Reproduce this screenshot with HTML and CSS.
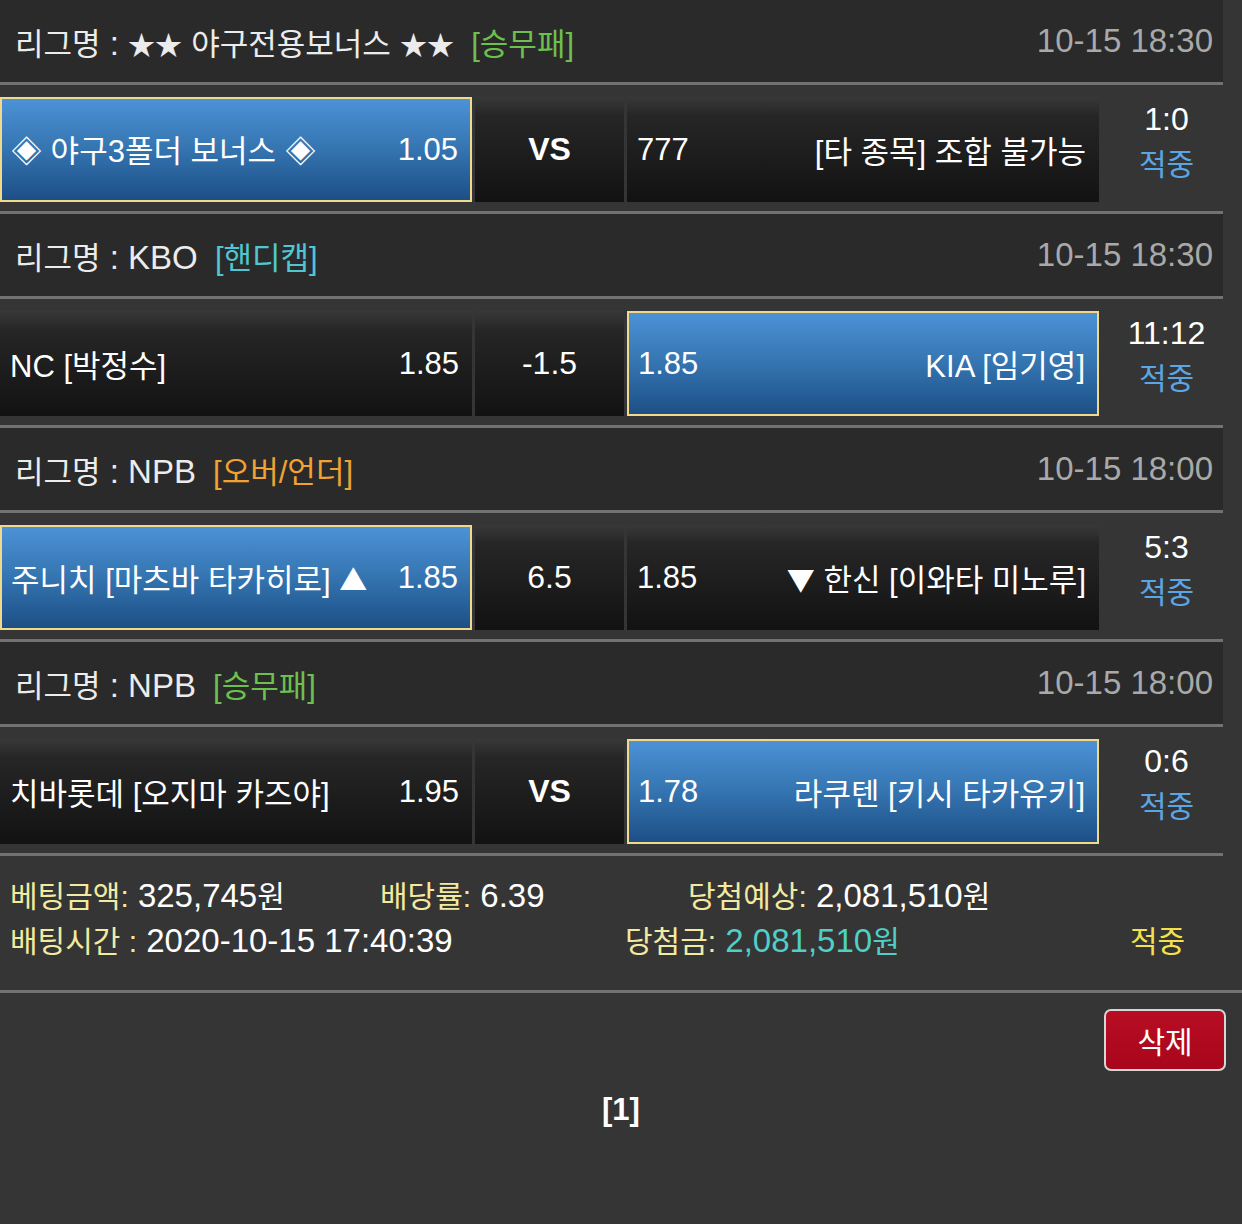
FILE: index.html
```html
<!DOCTYPE html>
<html lang="ko">
<head>
<meta charset="utf-8">
<title>베팅내역</title>
<link rel="stylesheet" href="styles.css">
</head>
<body>
<div class="page">
  <section class="league">
    <div class="lg-head">
      <span class="lg-name"><span class="k">리그명</span> : <span class="star">★★</span> <span class="k">야구전용보너스</span> <span class="star">★★</span> <span class="tag green">[승무패]</span></span>
      <span class="lg-time">10-15 18:30</span>
    </div>
    <div class="match">
      <div class="cell home sel"><span>◈ 야구3폴더 보너스 ◈</span><span>1.05</span></div>
      <div class="cell mid vs">VS</div>
      <div class="cell away"><span>777</span><span>[타 종목] 조합 불가능</span></div>
      <div class="result"><div class="score">1:0</div><div class="hit">적중</div></div>
    </div>
  </section>

  <section class="league">
    <div class="lg-head">
      <span class="lg-name"><span class="k">리그명</span> : KBO <span class="tag cyan">[핸디캡]</span></span>
      <span class="lg-time">10-15 18:30</span>
    </div>
    <div class="match">
      <div class="cell home"><span>NC [박정수]</span><span>1.85</span></div>
      <div class="cell mid">-1.5</div>
      <div class="cell away sel"><span>1.85</span><span>KIA [임기영]</span></div>
      <div class="result"><div class="score">11:12</div><div class="hit">적중</div></div>
    </div>
  </section>

  <section class="league">
    <div class="lg-head">
      <span class="lg-name"><span class="k">리그명</span> : NPB <span class="tag orange">[오버/언더]</span></span>
      <span class="lg-time">10-15 18:00</span>
    </div>
    <div class="match">
      <div class="cell home sel"><span>주니치 [마츠바 타카히로] <span class="arr">▲</span></span><span>1.85</span></div>
      <div class="cell mid">6.5</div>
      <div class="cell away"><span>1.85</span><span><span class="arr">▼</span> 한신 [이와타 미노루]</span></div>
      <div class="result"><div class="score">5:3</div><div class="hit">적중</div></div>
    </div>
  </section>

  <section class="league">
    <div class="lg-head">
      <span class="lg-name"><span class="k">리그명</span> : NPB <span class="tag green">[승무패]</span></span>
      <span class="lg-time">10-15 18:00</span>
    </div>
    <div class="match">
      <div class="cell home"><span>치바롯데 [오지마 카즈야]</span><span>1.95</span></div>
      <div class="cell mid vs">VS</div>
      <div class="cell away sel"><span>1.78</span><span>라쿠텐 [키시 타카유키]</span></div>
      <div class="result"><div class="score">0:6</div><div class="hit">적중</div></div>
    </div>
  </section>

  <section class="summary">
    <div class="sum-line">
      <span class="c1"><span class="lbl">베팅금액:</span> 325,745<span class="k">원</span></span>
      <span class="c2"><span class="lbl">배당률:</span> 6.39</span>
      <span><span class="lbl">당첨예상:</span> 2,081,510<span class="k">원</span></span>
    </div>
    <div class="sum-line">
      <span class="d1"><span class="lbl">배팅시간 :</span> 2020-10-15 17:40:39</span>
      <span class="d2"><span class="lbl">당첨금:</span> <span class="win">2,081,510<span class="k">원</span></span></span>
      <span class="final k">적중</span>
    </div>
  </section>

  <div class="actions">
    <button class="btn-del" type="button">삭제</button>
  </div>
  <div class="pager">[1]</div>
</div>
</body>
</html>
```

FILE: styles.css
```css
html, body {
  margin: 0;
  padding: 0;
  background: #353535;
}

.page {
  width: 1242px;
  min-height: 1224px;
  background: #353535;
  font-family: "Liberation Sans", "Noto Sans CJK KR", sans-serif;
  font-size: 30px;
  color: #ffffff;
}

.league {
  width: 1223px;
}

.lg-head {
  height: 82px;
  background: #2a2a2a;
  border-bottom: 3px solid #727272;
  display: flex;
  align-items: center;
  justify-content: space-between;
  padding: 0 10px 0 15px;
  color: #ececec;
  font-size: 33px;
  white-space: nowrap;
}

.lg-head .k {
  font-size: 31px;
}

.star {
  font-size: 27px;
}

.tag {
  margin-left: 8px;
  font-size: 31px;
}
.tag.green { color: #6cc04e; }
.tag.cyan { color: #4fc6d2; }
.tag.orange { color: #f0a232; }

.lg-time {
  color: #a9a9a9;
  font-size: 33px;
}

.match {
  height: 105px;
  padding: 12px 0 9px;
  border-bottom: 3px solid #727272;
  display: grid;
  grid-template-columns: 472px 149px 472px 1fr;
  column-gap: 3px;
}

.cell {
  box-sizing: border-box;
  height: 105px;
  display: flex;
  align-items: center;
  justify-content: space-between;
  padding: 0 13px 0 10px;
  background: linear-gradient(to bottom, #383838 0%, #262626 18%, #171717 80%, #121212 100%);
  color: #ffffff;
  font-size: 31px;
  white-space: nowrap;
}

.cell.sel {
  background: linear-gradient(to bottom, #4c92d6 0%, #3474b0 50%, #1d4f86 100%);
  border: 2px solid #f1d98c;
  padding: 0 12px 0 9px;
}

.cell.mid {
  justify-content: center;
  padding: 0;
  font-size: 32px;
}

.cell.vs {
  font-weight: bold;
  font-size: 32px;
}

.arr {
  font-family: "Noto Sans CJK KR", sans-serif;
  font-size: 28px;
}

.result {
  padding-left: 8px;
  display: flex;
  flex-direction: column;
  align-items: center;
  line-height: 45px;
}

.score {
  color: #ffffff;
  font-size: 32px;
}

.hit {
  color: #5ba6e2;
}

.summary {
  padding: 15px 0 29px;
  border-bottom: 3px solid #727272;
}

.sum-line {
  display: flex;
  height: 45px;
  align-items: center;
  padding-left: 10px;
  white-space: nowrap;
  font-size: 33px;
}

.sum-line .k {
  font-size: 30px;
}

.lbl {
  color: #f3eaa2;
  font-size: 30px;
}

.c1 { width: 370px; }
.c2 { width: 308px; }
.d1 { width: 615px; }
.d2 { width: 505px; }

.win { color: #4fcfc6; }
.final { color: #f4e24c; }

.actions {
  display: flex;
  justify-content: flex-end;
  padding: 16px 16px 0;
}

.btn-del {
  width: 122px;
  height: 62px;
  box-sizing: border-box;
  border: 2px solid #d6d6d6;
  border-radius: 7px;
  background: linear-gradient(to bottom, #b80d24, #a8061b);
  color: #ffffff;
  font-family: "Liberation Sans", "Noto Sans CJK KR", sans-serif;
  font-size: 30px;
  padding: 0;
}

.pager {
  margin-top: 16px;
  text-align: center;
  line-height: 45px;
  font-weight: bold;
  font-size: 31px;
  color: #ffffff;
}
```
